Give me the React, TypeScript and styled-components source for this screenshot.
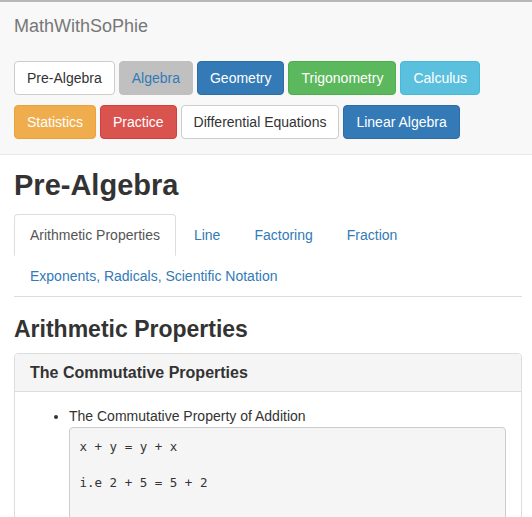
import styled, { createGlobalStyle } from "styled-components"

const GlobalStyle = createGlobalStyle`
    html, body {
        margin:0;
        padding:0;
        background:#fff;
    }
    body {
        font-family:"Liberation Sans", Arial, Helvetica, sans-serif;
        font-size:14px;
        line-height:1.42857;
        color:#333;
    }
    * { box-sizing:border-box; }
`

const Navbar = styled.nav`
    background:#f8f8f8;
    border-top:2px solid #b8b8b8;
    border-bottom:1px solid #e7e7e7;
    padding:0 14px 15px 14px;
`
const Brand = styled.div`
    font-size:18px;
    line-height:20px;
    color:#777;
    padding:14px 0 15px 0;
    margin-bottom:10px;
`
const ButtonRow = styled.div`
    display:flex;
    flex-wrap:wrap;
    gap:10px 4px;
`

const tones: Record<string, { bg: string; border: string; color: string }> = {
    default: { bg: "#fff", border: "#ccc", color: "#333" },
    muted: { bg: "#c0c0c0", border: "#c0c0c0", color: "#337ab7" },
    primary: { bg: "#337ab7", border: "#2e6da4", color: "#fff" },
    success: { bg: "#5cb85c", border: "#4cae4c", color: "#fff" },
    info: { bg: "#5bc0de", border: "#46b8da", color: "#fff" },
    warning: { bg: "#f0ad4e", border: "#eea236", color: "#fff" },
    danger: { bg: "#d9534f", border: "#d43f3a", color: "#fff" },
}

const Btn = styled.button<{ $tone: string }>`
    font-family:inherit;
    font-size:14px;
    line-height:20px;
    padding:6px 12px;
    border-radius:4px;
    border:1px solid ${p => tones[p.$tone].border};
    background:${p => tones[p.$tone].bg};
    color:${p => tones[p.$tone].color};
    cursor:pointer;
`

const Container = styled.main`
    padding:0 10px 0 14px;
`
const PageTitle = styled.h1`
    font-size:29px;
    font-weight:700;
    line-height:1.1;
    margin:15px 0 12px 0;
    color:#333;
`
const Tabs = styled.ul`
    list-style:none;
    margin:0;
    padding:0;
    display:flex;
    flex-wrap:wrap;
    border-bottom:1px solid #ddd;
`
const Tab = styled.li<{ $active?: boolean }>`
    margin-right:2px;
    margin-bottom:-1px;
    padding:10px 15px;
    line-height:20px;
    border:1px solid ${p => (p.$active ? "#ddd" : "transparent")};
    border-bottom-color:transparent;
    border-radius:4px 4px 0 0;
    background:${p => (p.$active ? "#fff" : "transparent")};
    color:${p => (p.$active ? "#555" : "#337ab7")};
    cursor:pointer;
`
const SectionTitle = styled.h2`
    font-size:23px;
    font-weight:700;
    line-height:1.1;
    margin:20px 0 11px 0;
`
const Panel = styled.section`
    border:1px solid #ddd;
    border-radius:4px;
    background:#fff;
`
const PanelHeading = styled.div`
    background:#f5f5f5;
    border-bottom:1px solid #ddd;
    border-radius:3px 3px 0 0;
    padding:10px 15px;
`
const PanelTitle = styled.h3`
    margin:0;
    font-size:16px;
    font-weight:700;
    line-height:17px;
    color:#333;
`
const PanelBody = styled.div`
    padding:15px 15px 30px 15px;
`
const List = styled.ul`
    margin:0;
    padding-left:39px;
`
const Code = styled.pre`
    margin:0 0 10px 0;
    padding:9.5px;
    min-height:120px;
    background:#f5f5f5;
    border:1px solid #ccc;
    border-radius:4px;
    font-family:"DejaVu Sans Mono", "Liberation Mono", monospace;
    font-size:12.5px;
    line-height:18.5px;
    color:#333;
`
const CodeLine = styled.div`
    margin-bottom:17.5px;
`

const subjects = [
    { label: "Pre-Algebra", tone: "default" },
    { label: "Algebra", tone: "muted" },
    { label: "Geometry", tone: "primary" },
    { label: "Trigonometry", tone: "success" },
    { label: "Calculus", tone: "info" },
    { label: "Statistics", tone: "warning" },
    { label: "Practice", tone: "danger" },
    { label: "Differential Equations", tone: "default" },
    { label: "Linear Algebra", tone: "primary" },
]

const topics = ["Arithmetic Properties", "Line", "Factoring", "Fraction", "Exponents, Radicals, Scientific Notation"]

export default function App() {
    return (
        <>
            <GlobalStyle />
            <Navbar>
                <Brand>MathWithSoPhie</Brand>
                <ButtonRow>
                    {subjects.map(s => (
                        <Btn key={s.label} $tone={s.tone}>{s.label}</Btn>
                    ))}
                </ButtonRow>
            </Navbar>
            <Container>
                <PageTitle>Pre-Algebra</PageTitle>
                <Tabs>
                    {topics.map((t, i) => (
                        <Tab key={t} $active={i === 0}>{t}</Tab>
                    ))}
                </Tabs>
                <SectionTitle>Arithmetic Properties</SectionTitle>
                <Panel>
                    <PanelHeading>
                        <PanelTitle>The Commutative Properties</PanelTitle>
                    </PanelHeading>
                    <PanelBody>
                        <List>
                            <li>
                                The Commutative Property of Addition
                                <Code>
                                    <CodeLine>x + y = y + x</CodeLine>
                                    <CodeLine>i.e 2 + 5 = 5 + 2</CodeLine>
                                </Code>
                            </li>
                        </List>
                    </PanelBody>
                </Panel>
            </Container>
        </>
    )
}
